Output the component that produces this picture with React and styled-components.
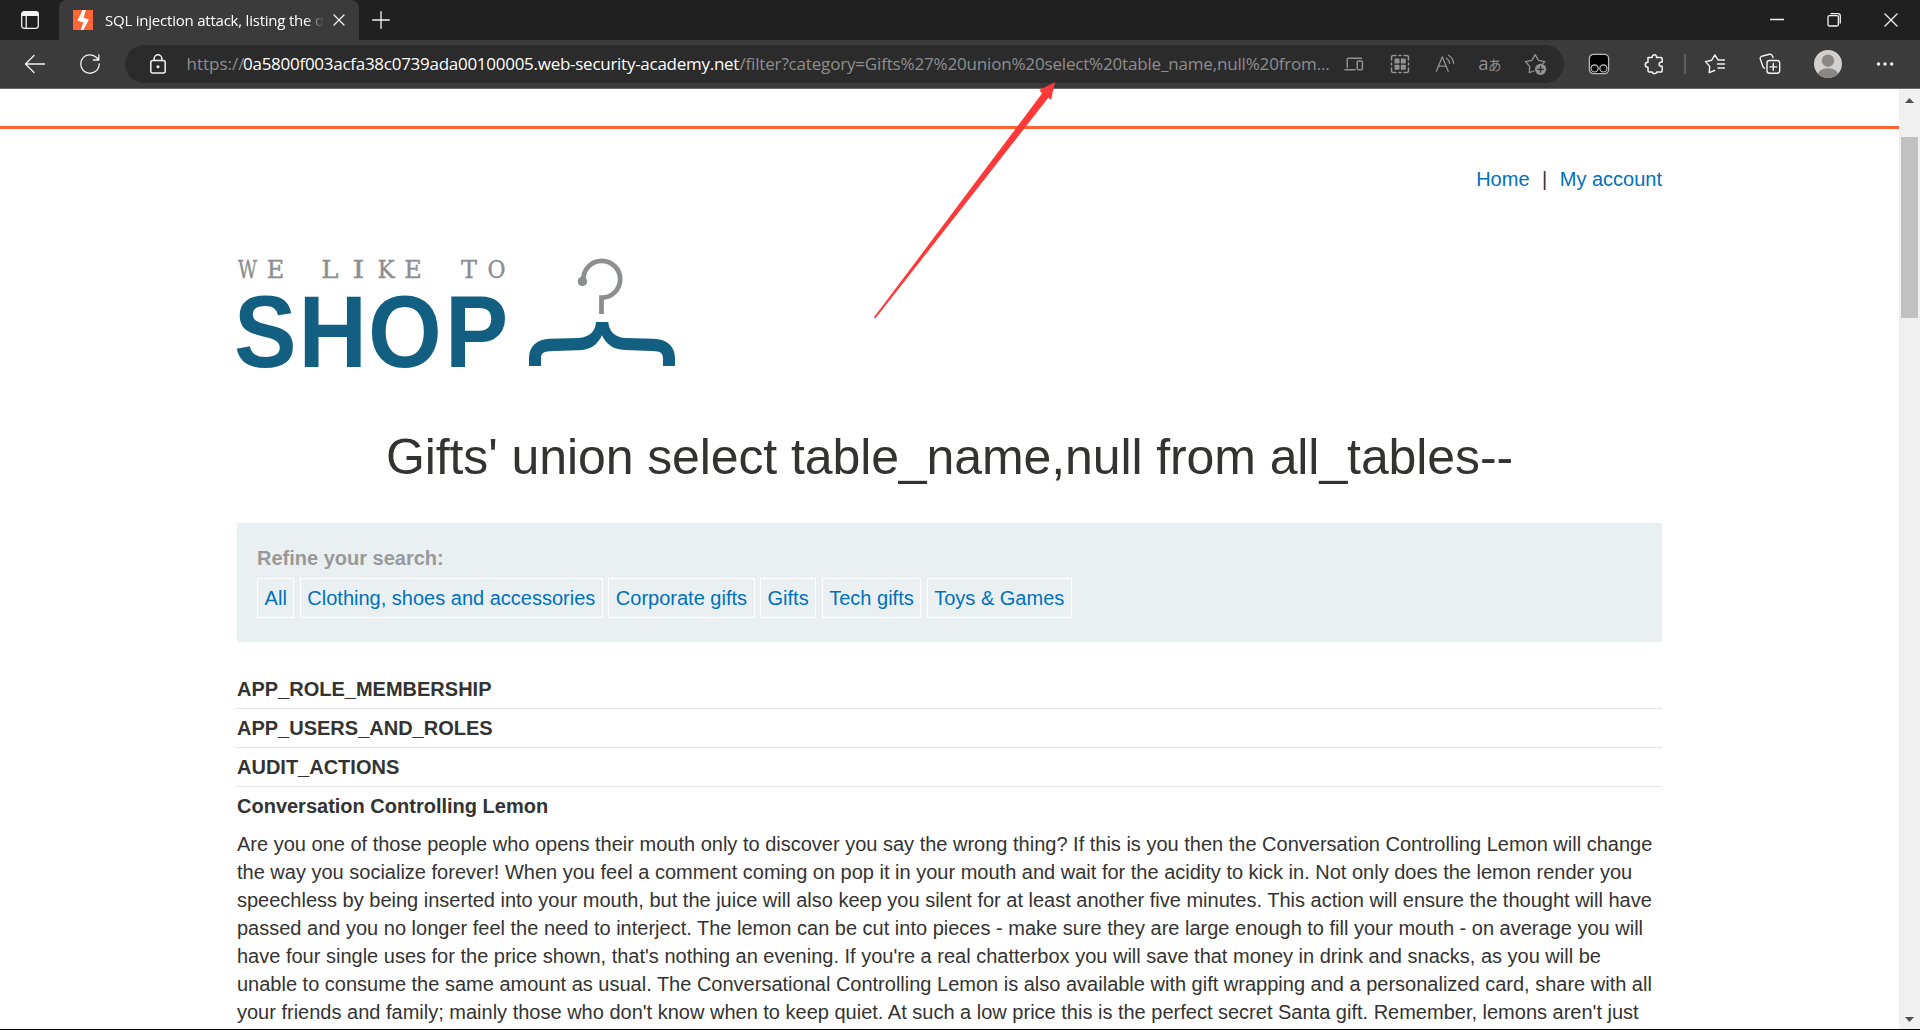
import React from "react";
import styled, { createGlobalStyle } from "styled-components";

const Global = createGlobalStyle`
  * { box-sizing: border-box; }
  body { margin: 0; background: #fff; }
`;

const Window = styled.div`
  position: relative;
  display: flex;
  flex-direction: column;
  width: 1920px;
  height: 1030px;
  overflow: hidden;
  border-bottom: 1px solid #000;
  background: #fff;
`;

const ChromeFont = `"Open Sans", "Noto Sans", "Noto Sans CJK JP", sans-serif`;

const TitleBar = styled.header`
  display: flex;
  flex: none;
  height: 40px;
  background: #202020;
  color: #fff;
  font-family: ${ChromeFont};
`;

const Slot = styled.div`
  display: flex;
  flex: none;
  align-items: center;
  justify-content: center;
  width: ${(p) => p.$w}px;
  color: ${(p) => p.$color || "#f2f2f2"};
  svg { display: block; }
`;

const Tab = styled.div`
  display: flex;
  align-items: center;
  width: 300px;
  height: 40px;
  padding: 0 13px 0 14px;
  background: #3b3b3b;
  border-radius: 8px 8px 0 0;
`;

const TabTitle = styled.div`
  width: 222px;
  margin-left: 12px;
  white-space: nowrap;
  font-size: 15px;
  line-height: 20px;
  letter-spacing: -0.22px;
  mask-image: linear-gradient(90deg, #000 200px, transparent 219px);
`;

const TabClose = styled(Slot)`
  margin-left: auto;
`;

const Spacer = styled.div`
  flex: 1;
`;

const ToolBar = styled.div`
  display: flex;
  flex: none;
  height: 49px;
  padding: 0 8px 0 7.5px;
  background: #3b3b3b;
  border-bottom: 1px solid #6b6b6b;
`;

const Address = styled.div`
  display: flex;
  align-items: center;
  width: 1439px;
  height: 38px;
  margin: 5px 7.5px 0 7.5px;
  padding: 0 5.3px 0 0;
  border-radius: 19px;
  background: #2b2b2b;
`;

const Url = styled.div`
  flex: 1;
  display: flex;
  margin-left: -3.5px;
  padding-bottom: 1px;
  white-space: nowrap;
  font-family: ${ChromeFont};
  font-size: 17px;
  line-height: 24px;
`;

const UrlPart = styled.span`
  flex: none;
  width: ${(p) => p.$w}px;
  color: ${(p) => (p.$host ? "#fff" : "#8e8e8e")};
  letter-spacing: ${(p) => p.$track}px;
`;

const Translate = styled.span`
  margin-left: -2px;
  padding-bottom: 1px;
  font: 18.5px/20px ${ChromeFont};
  letter-spacing: -0.6px;
  color: #929292;
  small { font-size: 13.5px; }
`;

const Divider = styled.div`
  width: 2px;
  height: 20px;
  margin: 14px 1.5px 0 2.5px;
  background: #5c5c5c;
`;

const Viewport = styled.div`
  display: flex;
  flex: 1;
  min-height: 0;
`;

const Page = styled.main`
  flex: 1;
  height: 940px;
  overflow: hidden;
  padding-top: 37px;
  color: #333332;
  font: 20px/28px "Liberation Sans", Arial, sans-serif;
`;

const AccentRule = styled.div`
  height: 3px;
  background: #ff6633;
`;

const Container = styled.div`
  width: 1425px;
  margin-left: 237px;
`;

const Nav = styled.nav`
  display: flex;
  justify-content: flex-end;
  gap: 12.5px;
  padding-top: 36px;
  height: 119px;
`;

const Link = styled.a`
  color: #0071bc;
  text-decoration: none;
`;

const LogoBox = styled.div`
  height: 179px;
  svg { display: block; overflow: visible; }
`;

const Heading = styled.h1`
  margin: 0;
  height: 96px;
  font-size: 50px;
  font-weight: 400;
  line-height: 60px;
  letter-spacing: -0.1px;
  text-align: center;
  white-space: nowrap;
`;

const Filters = styled.section`
  height: 119px;
  padding: 21px 20px;
  background: #eaf0f2;
`;

const FilterLabel = styled.div`
  color: #999;
  font-weight: 700;
`;

const Tags = styled.div`
  display: flex;
  gap: 5.35px;
  padding-top: 6px;
`;

const Tag = styled(Link)`
  height: 40px;
  padding: 5px 6.6px;
  border: 1px solid #fff;
`;

const Rows = styled.section`
  padding-top: 28px;
`;

const Row = styled.div`
  height: 39px;
  padding-top: 5px;
  border-bottom: 1px solid ${(p) => (p.$plain ? "transparent" : "#e4e4e4")};
  font-weight: 700;
`;

const Paragraph = styled.p`
  margin: 4px 0 0;
  white-space: nowrap;
`;

const ScrollBar = styled.div`
  display: flex;
  flex-direction: column;
  align-items: center;
  width: 21px;
  background: #f0f0f0;
`;

const ScrollArrow = styled.div`
  height: ${(p) => p.$h}px;
  padding-top: 9px;
  svg { display: block; }
`;

const Thumb = styled.div`
  width: 17px;
  height: 181px;
  background: #c1c1c1;
`;

const Pointer = styled.svg`
  position: absolute;
  left: 870px;
  top: 78px;
`;

const Icon = ({ w = 20, h = 20, sw = 1.3, children }) => (
  <svg width={w} height={h} viewBox={`0 0 ${w} ${h}`} fill="none" stroke="currentColor" strokeWidth={sw} strokeLinecap="round" strokeLinejoin="round">
    {children}
  </svg>
);

const TabActions = () => (
  <Icon sw={1.3}>
    <rect x="1.7" y="1.7" width="16.6" height="16.6" rx="2.5" />
    <path d="M1.5 6V4Q1.5 1.5 4 1.5H16Q18.5 1.5 18.5 4V6Z" fill="currentColor" stroke="none" />
    <path d="M6.2 6V18" />
  </Icon>
);

const Favicon = () => (
  <svg width="20" height="20" viewBox="0 0 20 20">
    <rect width="20" height="20" fill="#ff6633" />
    <path d="M9.6 0H12.8L10.6 7.8L15.9 9.6L10.4 20H7.6L10.4 12.6L4.4 10.6Z" fill="#fff" />
  </svg>
);

const Logo = () => (
  <svg width="460" height="150" viewBox="237 248 460 150">
    <g fill="#8d8e90" stroke="#8d8e90" strokeWidth="0.4" fontFamily='"DejaVu Serif", serif' fontSize="25" textAnchor="middle">
      {[["W", 247.5, 0.74], ["E", 275.5, 0.96], ["L", 330, 1.04], ["I", 358.5, 1.2], ["K", 386, 0.92], ["E", 413, 0.96], ["T", 469, 0.96], ["O", 496.5, 0.88]].map(([c, x, s], i) => (
        <text key={i} transform={`translate(${x} 277.5) scale(${s} 1)`}>{c}</text>
      ))}
    </g>
    <g fill="#125f82" fontFamily='"Liberation Sans", Arial, sans-serif' fontWeight="700" fontSize="102">
      {[["S", 234, 0.92], ["H", 298.6, 0.93], ["O", 368, 0.93], ["P", 444.9, 0.93]].map(([c, x, s]) => (
        <text key={c} transform={`translate(${x} 366.5) scale(${s} 1)`}>{c}</text>
      ))}
    </g>
    <g fill="none" stroke="#8d8e90" strokeWidth="4.8">
      <path d="M583.4 279.5A18.4 18.4 0 1 1 601.5 297.6V314" />
    </g>
    <circle cx="582.4" cy="281.4" r="4.7" fill="#8d8e90" />
    <path transform="translate(220 240) scale(.33333)" fill="#125f82" d="M1128 246H1165C1166 270 1182 292 1215 294L1300 296C1342 298 1365 318 1365 355V378H1329V357C1329 338 1322 334 1297 333L1215 330C1180 329 1160 315 1146 286C1132 315 1112 330 1075 331L1000 333C970 334 963 338 963 357V378H927V355C927 318 950 298 990 296L1075 294C1112 292 1127 270 1128 246Z" />
  </svg>
);

const tags = ["All", "Clothing, shoes and accessories", "Corporate gifts", "Gifts", "Tech gifts", "Toys & Games"];
const tables = ["APP_ROLE_MEMBERSHIP", "APP_USERS_AND_ROLES", "AUDIT_ACTIONS"];
const lines = [
  "Are you one of those people who opens their mouth only to discover you say the wrong thing? If this is you then the Conversation Controlling Lemon will change",
  "the way you socialize forever! When you feel a comment coming on pop it in your mouth and wait for the acidity to kick in. Not only does the lemon render you",
  "speechless by being inserted into your mouth, but the juice will also keep you silent for at least another five minutes. This action will ensure the thought will have",
  "passed and you no longer feel the need to interject. The lemon can be cut into pieces - make sure they are large enough to fill your mouth - on average you will",
  "have four single uses for the price shown, that's nothing an evening. If you're a real chatterbox you will save that money in drink and snacks, as you will be",
  "unable to consume the same amount as usual. The Conversational Controlling Lemon is also available with gift wrapping and a personalized card, share with all",
  "your friends and family; mainly those who don't know when to keep quiet. At such a low price this is the perfect secret Santa gift. Remember, lemons aren't just",
];

const dim = "#929292";

export default function App() {
  return (
    <>
      <Global />
      <Window>
        <TitleBar>
          <Slot $w={59}><TabActions /></Slot>
          <Tab>
            <Favicon />
            <TabTitle>SQL injection attack, listing the da</TabTitle>
            <TabClose $w={14}><Icon w={12} h={12}><path d="M1 1L11 11M11 1L1 11" /></Icon></TabClose>
          </Tab>
          <Slot $w={44}><Icon w={18} h={18}><path d="M9 .7V17.3M.7 9H17.3" /></Icon></Slot>
          <Spacer />
          <Slot $w={57}><Icon w={14} h={14}><path d="M.5 6.5H13.5" /></Icon></Slot>
          <Slot $w={57}><Icon w={14} h={14}><rect x="1" y="2.6" width="10.4" height="10.4" rx="1.5" /><path d="M4 .7H11Q13.3 .7 13.3 3V10" /></Icon></Slot>
          <Slot $w={58}><Icon w={14} h={14}><path d="M1 1L13 13M13 1L1 13" /></Icon></Slot>
        </TitleBar>

        <ToolBar>
          <Slot $w={55}><Icon w={22} h={20}><path d="M1.5 10H20.5M10 1.5L1.5 10L10 18.5" /></Icon></Slot>
          <Slot $w={55}><Icon w={22} h={22}><path d="M20.2 11A9.2 9.2 0 1 1 17.5 4.5L19.7 6.8M19.8 1.8V7H14.4" /></Icon></Slot>
          <Address>
            <Slot $w={65}><Icon w={18} h={20} sw={1.5}><rect x="1.8" y="6.6" width="14.4" height="12.4" rx="2" /><path d="M5.2 6.5V4.6A3.8 3.8 0 0 1 12.8 4.6V6.5" /><circle cx="9" cy="12.8" r="0.8" fill="currentColor" /></Icon></Slot>
            <Url>
              <UrlPart $w={56.5} $track={0}>https://</UrlPart>
              <UrlPart $w={496.5} $host $track={-0.27}>0a5800f003acfa38c0739ada00100005.web-security-academy.net</UrlPart>
              <UrlPart $w={590} $track={-0.17}>/filter?category=Gifts%27%20union%20select%20table_name,null%20from...</UrlPart>
            </Url>
            <Slot $w={45.4} $color={dim}><Icon w={20} h={18} sw={1.5}><path d="M3.2 12.5V4.3Q3.2 3.2 4.3 3.2H17.5M1 14.7H11" /><rect x="13.2" y="6" width="5.2" height="8.7" rx="1" /></Icon></Slot>
            <Slot $w={45.4} $color={dim}>
              <Icon sw={1.5}>
                <path d="M1.5 6V3.5Q1.5 1.5 3.5 1.5H6M9 1.5H11M14 1.5H16.5Q18.5 1.5 18.5 3.5V6M18.5 9V11M18.5 14V16.5Q18.5 18.5 16.5 18.5H14M11 18.5H9M6 18.5H3.5Q1.5 18.5 1.5 16.5V14M1.5 11V9" />
                <g fill="currentColor" stroke="none"><rect x="4.5" y="4.5" width="5" height="5" rx=".6" /><rect x="10.8" y="4.5" width="5" height="5" rx=".6" /><rect x="4.5" y="10.8" width="5" height="5" rx=".6" /><rect x="10.8" y="10.8" width="5" height="5" rx=".6" /></g>
              </Icon>
            </Slot>
            <Slot $w={45.4} $color={dim}><Icon><path d="M1.4 17.3L7.3 2.8L13.2 17.3M3.5 12.2H11.1M11.4 4.2Q14.3 6 14.7 9.4M13.5 1.2Q18.3 4.2 18.6 9.5" /></Icon></Slot>
            <Slot $w={45.4}><Translate>a<small>あ</small></Translate></Slot>
            <Slot $w={45.4} $color={dim}>
              <Icon w={24} h={22}>
                <path d="M10 18L5.3 19.7L5.7 13.4L1.5 8.6L7.9 7.3L11.2 1.6L14.5 7.3L20.8 8.6L18.8 10.8" />
                <circle cx="16.6" cy="16.3" r="5.6" fill="currentColor" stroke="none" />
                <path d="M16.6 13.5V19.1M13.8 16.3H19.4" stroke="#2b2b2b" />
              </Icon>
            </Slot>
          </Address>
          <Slot $w={55}>
            <svg width="22" height="22" viewBox="0 0 22 22"><rect x="1.4" y="1.4" width="19.2" height="19.2" rx="4" fill="#000" stroke="#b8b8b8" strokeWidth="1.3" /><circle cx="6.6" cy="15.4" r="3.6" fill="#111" stroke="#c4c4c4" strokeWidth="1.2" /><circle cx="15.4" cy="15.4" r="3.6" fill="#111" stroke="#c4c4c4" strokeWidth="1.2" /></svg>
          </Slot>
          <Slot $w={55}><Icon w={20} h={22} sw={1.5}><path d="M4 4.5H8.2C7.6 .9 13.1 .9 12.5 4.5H17Q18.2 4.5 18.2 5.7V9.2C14 8.4 14 14 18.2 13.3V17.8Q18.2 19 17 19H12.7C13 21.1 8 21.1 8.2 19H5.2Q4 19 4 17.8V14.2C.4 14.2 .4 9.2 4 9.2Z" /></Icon></Slot>
          <Divider />
          <Slot $w={55}><Icon w={22} h={22} sw={1.4}><path d="M10.7 17.5L5.2 19.7L5.7 13.4L1.5 8.6L7.7 7.2L10.9 1.8L14 6.8M14 7H20.4M13.5 11H20.4M14 15H20.4" /></Icon></Slot>
          <Slot $w={55}><Icon w={22} h={22} sw={1.4}><rect x="8" y="7.5" width="12.7" height="12.7" rx="2.5" /><path d="M14.3 10.5V17.2M11 13.9H17.7M5.5 15.2Q4.2 14.8 3.8 13.3L1.3 6Q.8 4 2.7 3.3L10.5 1.3Q12.5 .9 13.3 2.7L14 4.6" /></Icon></Slot>
          <Slot $w={60}>
            <svg width="30" height="30" viewBox="0 0 30 30"><defs><clipPath id="face"><circle cx="15" cy="15" r="14" /></clipPath></defs><g clipPath="url(#face)"><rect width="30" height="30" fill="#d2d0ce" /><circle cx="15" cy="11.7" r="6.2" fill="#8a8684" /><ellipse cx="15" cy="27" rx="11" ry="7.8" fill="#8a8684" /></g></svg>
          </Slot>
          <Slot $w={54}><Icon w={18} h={6}><g fill="currentColor" stroke="none"><circle cx="2.5" cy="3" r="1.7" /><circle cx="9" cy="3" r="1.7" /><circle cx="15.7" cy="3" r="1.7" /></g></Icon></Slot>
        </ToolBar>

        <Viewport>
          <Page>
            <AccentRule />
            <Container>
              <Nav><Link>Home</Link><span>|</span><Link>My account</Link></Nav>
              <LogoBox><Logo /></LogoBox>
              <Heading>Gifts' union select table_name,null from all_tables--</Heading>
              <Filters>
                <FilterLabel>Refine your search:</FilterLabel>
                <Tags>{tags.map((t) => <Tag key={t}>{t}</Tag>)}</Tags>
              </Filters>
              <Rows>
                {tables.map((t) => <Row key={t}>{t}</Row>)}
                <Row $plain>Conversation Controlling Lemon</Row>
                <Paragraph>{lines.map((l) => <React.Fragment key={l}>{l}<br /></React.Fragment>)}</Paragraph>
              </Rows>
            </Container>
          </Page>
          <ScrollBar>
            <ScrollArrow $h={48}><svg width="9" height="5" viewBox="0 0 9 5"><path d="M0 5L4.5 0L9 5Z" fill="#505050" /></svg></ScrollArrow>
            <Thumb />
            <Spacer />
            <ScrollArrow $h={21}><svg width="9" height="5" viewBox="0 0 9 5"><path d="M0 0L4.5 5L9 0Z" fill="#505050" /></svg></ScrollArrow>
          </ScrollBar>
        </Viewport>

        <Pointer width="190" height="245" viewBox="870 78 190 245">
          <path d="M873.8 317.6L1042 93.6L1039.3 90L1055 82.3L1051 100L1048.3 97.8L875.3 318.6Z" fill="#ff3838" />
        </Pointer>
      </Window>
    </>
  );
}
